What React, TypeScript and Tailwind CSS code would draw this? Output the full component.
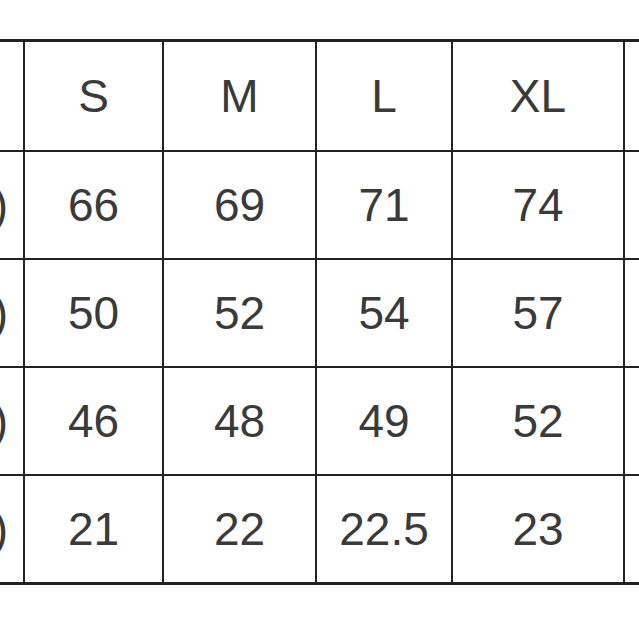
const rows = [
  { label: "", values: ["S", "M", "L", "XL"] },
  { label: "着丈(cm)", values: ["66", "69", "71", "74"] },
  { label: "身幅(cm)", values: ["50", "52", "54", "57"] },
  { label: "肩幅(cm)", values: ["46", "48", "49", "52"] },
  { label: "袖丈(cm)", values: ["21", "22", "22.5", "23"] },
];

export default function App() {
  return (
    <div
      className="w-[639px] h-[639px] overflow-hidden bg-white pt-[39px]"
      style={{ fontFamily: '"Liberation Sans", "Noto Sans CJK JP", sans-serif' }}
    >
      <div className="ml-[-114px] w-max grid grid-cols-[137px_137px_151px_134px_170px_137px] grid-rows-[108px_106px_106px_106px_106px] gap-[2px] py-[3px] bg-[#222]">
        {rows.map((r, i) => (
          <>
            <div key={`l${i}`} className="bg-white flex items-center justify-end pr-[15px] text-[46px] text-[#3a3a3a] whitespace-nowrap overflow-hidden">
              {r.label}
            </div>
            {r.values.map((v, j) => (
              <div key={`${i}-${j}`} className="bg-white flex items-center justify-center text-[46px] leading-none text-[#3a3a3a]">
                {v}
              </div>
            ))}
            <div key={`r${i}`} className="bg-white" />
          </>
        ))}
      </div>
    </div>
  );
}
